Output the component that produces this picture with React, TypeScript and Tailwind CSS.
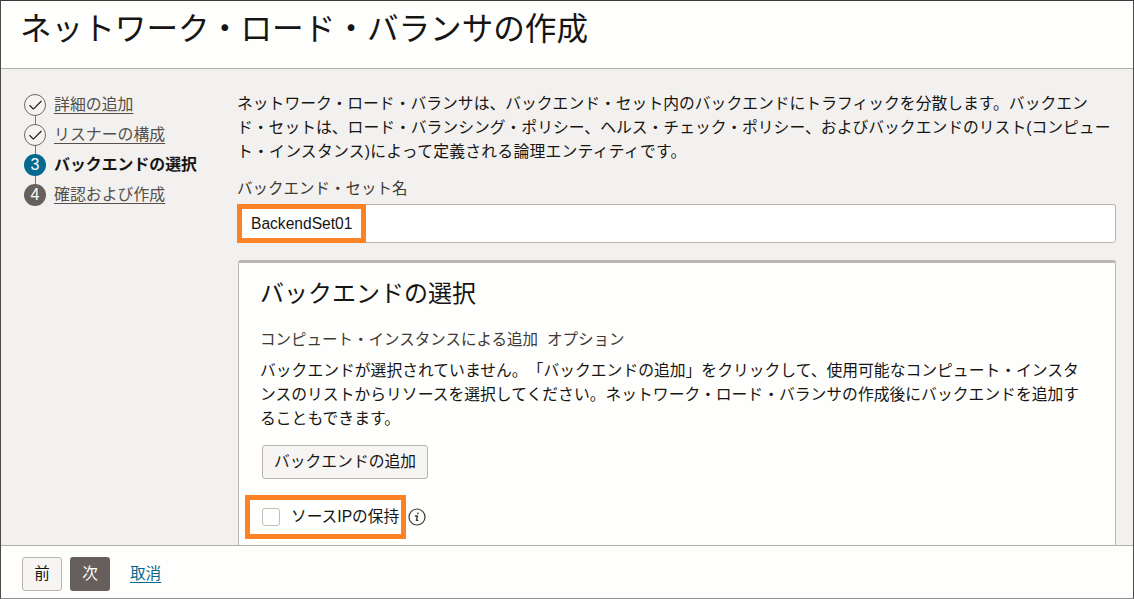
import { Check } from "lucide-react";

const steps = [
  { label: "詳細の追加", state: "done" },
  { label: "リスナーの構成", state: "done" },
  { label: "バックエンドの選択", state: "current", num: 3 },
  { label: "確認および作成", state: "todo", num: 4 },
];

function Step({ label, state, num, last }: { label: string; state: string; num?: number; last: boolean }) {
  return (
    <div className="relative flex h-[30px] items-center gap-[8px]">
      {!last && <div className="absolute left-[10.5px] top-[20px] h-[20px] w-px bg-[#7a736e]" />}
      {state === "done" && (
        <div className="relative z-10 flex h-[22px] w-[22px] items-center justify-center rounded-full border border-[#6f6964] bg-[#f5f4f2]">
          <Check size={17} strokeWidth={1.5} className="text-[#161513]" />
        </div>
      )}
      {state === "current" && (
        <div className="relative z-10 flex h-[22px] w-[22px] items-center justify-center rounded-full bg-[#04698f] text-[16px] text-white">
          {num}
        </div>
      )}
      {state === "todo" && (
        <div className="relative z-10 flex h-[22px] w-[22px] items-center justify-center rounded-full bg-[#665f5b] text-[16px] text-white">
          {num}
        </div>
      )}
      {state === "current" ? (
        <span className="text-[15.9px] font-bold text-[#161513]">{label}</span>
      ) : (
        <span className="text-[15.9px] text-[#55504c] underline underline-offset-[3px]">{label}</span>
      )}
    </div>
  );
}

export default function App() {
  return (
    <div className="flex h-[599px] w-[1134px] flex-col overflow-hidden border-x border-t border-b border-x-[#4a4a4a] border-t-[#3a3a3a] border-b-[#8f8f8f] bg-[#fefefd] font-['Liberation_Sans','Noto_Sans_CJK_JP',sans-serif] text-[#161513] [text-spacing-trim:space-all]">
      {/* ヘッダー */}
      <div className="h-[68px] shrink-0 border-b border-[#b3aeaa] pl-[19px] pt-[5px]">
        <h1 className="text-[31.6px] leading-[46px]">ネットワーク・ロード・バランサの作成</h1>
      </div>

      <div className="flex min-h-0 flex-1 overflow-hidden bg-[#f2f1ef]">
        {/* ステップ */}
        <div className="w-[236px] shrink-0 pl-[23px] pt-[21px]">
          {steps.map((s, i) => (
            <Step key={s.label} label={s.label} state={s.state} num={s.num} last={i === steps.length - 1} />
          ))}
        </div>

        {/* 本文 */}
        <div className="w-[879px] pt-[23px]">
          <p className="text-[15.8px] leading-[24px]">
            ネットワーク・ロード・バランサは、バックエンド・セット内のバックエンドにトラフィックを分散します。バックエン
            <br />
            ド・セットは、ロード・バランシング・ポリシー、ヘルス・チェック・ポリシー、およびバックエンドのリスト(コンピュー
            <br />
            <span className="tracking-[0.25px]">ト・インスタンス)によって定義される論理エンティティです。</span>
          </p>
          <label className="mt-[14px] block text-[15.5px] leading-[22px] text-[#3d3935]">バックエンド・セット名</label>
          <div className="relative ml-[1px] mt-[4px] flex h-[39px] items-center rounded-[3px] border border-[#b9b4af] bg-white pl-[12px] text-[15.6px]">
            BackendSet01
            <div className="absolute -left-[2px] -top-[1px] h-[39px] w-[129px] border-[5px] border-[#fd8125]" />
          </div>

          {/* カード */}
          <div className="ml-[1px] mt-[17px] h-[400px] rounded-t-[3px] border border-t-[3px] border-[#bcb7b1] border-t-[#bcb7b1] bg-[#fefefd] pl-[21px] pr-[20px]">
            <h2 className="pt-[14px] text-[24px] leading-[34px]">バックエンドの選択</h2>
            <div className="mt-[18px] text-[15.5px] leading-[22px] text-[#3d3935]">
              コンピュート・インスタンスによる追加<span className="ml-[9px]">オプション</span>
            </div>
            <p className="mt-[8px] text-[15.8px] leading-[24px]">
              バックエンドが選択されていません。「バックエンドの追加」をクリックして、使用可能なコンピュート・インスタ
              <br />
              ンスのリストからリソースを選択してください。ネットワーク・ロード・バランサの作成後にバックエンドを追加す
              <br />
              ることもできます。
            </p>
            <button className="ml-[2px] mt-[14px] block h-[34px] w-[166px] rounded-[3px] border border-[#b9b4af] bg-[#f6f5f3] text-[15.8px]">
              バックエンドの追加
            </button>
            <div className="relative mt-[16px] flex h-[44px] items-center pl-[2px]">
              <div className="absolute -left-[15px] top-0 h-[44px] w-[161px] border-[5px] border-[#fd8125]" />
              <div className="h-[18px] w-[18px] rounded-[3px] border border-[#c2bdb8] bg-white" />
              <span className="ml-[11px] text-[15.7px]">ソースIPの保持</span>
              <svg viewBox="0 0 18 18" className="ml-[9px] h-[18px] w-[18px] text-[#3d3935]" fill="none" stroke="currentColor">
                <circle cx="9" cy="9" r="8" strokeWidth="1.2" />
                <path d="M7.4 8h2l-1 4.4h1.4" strokeWidth="1.4" strokeLinecap="round" strokeLinejoin="round" />
                <circle cx="9.9" cy="5.3" r="0.9" fill="currentColor" stroke="none" />
              </svg>
            </div>
          </div>
        </div>
      </div>

      {/* フッター */}
      <div className="flex h-[53px] shrink-0 items-center border-t border-[#b3aeaa] pl-[21px] pt-[4px]">
        <button className="h-[34px] w-[40px] rounded-[3px] border border-[#b9b4af] bg-[#f6f5f3] text-[15.6px]">前</button>
        <button className="ml-[8px] h-[34px] w-[40px] rounded-[3px] bg-[#665f5b] text-[15.6px] text-white">次</button>
        <a className="ml-[20px] text-[15.6px] text-[#04698f] underline underline-offset-[3px]">取消</a>
      </div>
    </div>
  );
}
